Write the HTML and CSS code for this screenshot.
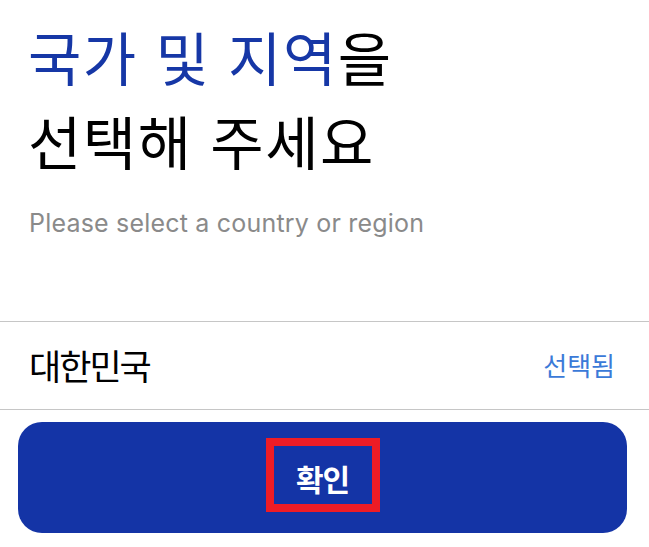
FILE: index.html
```html
<!DOCTYPE html>
<html lang="ko">
<head>
<meta charset="utf-8">
<link rel="stylesheet" href="styles.css">
</head>
<body>
<main class="page">
  <header class="intro">
    <h1 class="title"><span class="accent">국가 및 지역</span>을<br>선택해 주세요</h1>
    <p class="subtitle">Please select a country or region</p>
  </header>
  <ul class="list">
    <li class="row"><span class="name">대한민국</span><span class="status">선택됨</span></li>
  </ul>
  <div class="actions">
    <button class="confirm"><span class="label">확인</span><span class="mark"></span></button>
  </div>
</main>
</body>
</html>
```
FILE: styles.css
```css
* { box-sizing: border-box; }
html, body { margin: 0; padding: 0; background: #fff; }
body {
  width: 649px;
  height: 547px;
  overflow: hidden;
  font-family: "Noto Sans CJK KR", "Noto Sans", sans-serif;
}
.page { display: flex; flex-direction: column; }
.intro { padding: 14px 29px 0 28px; height: 321px; }
.title {
  margin: 0;
  font-size: 58px;
  font-weight: 400;
  line-height: 84px;
  letter-spacing: 1.5px;
  color: #000;
}
.accent { color: #1637a6; }
.subtitle {
  margin: 26px 0 0 1px;
  font-family: "Inter", "Liberation Sans", sans-serif;
  font-size: 25px;
  color: #8a8a8a;
  letter-spacing: 0.2px;
}
.list { list-style: none; margin: 0; padding: 0; }
.row {
  height: 89px;
  border-top: 1px solid #c6c6c6;
  border-bottom: 1px solid #c6c6c6;
  display: flex;
  align-items: center;
  justify-content: space-between;
  padding: 0 34px 2px 29px;
}
.name { font-size: 35px; color: #000; letter-spacing: -2px; }
.status { font-size: 26px; color: #3b7ad8; letter-spacing: 0; }
.actions { padding: 12px 22px 0 18px; }
.confirm {
  position: relative;
  width: 100%;
  height: 111px;
  border: 0;
  border-radius: 24px;
  background: #1434a6;
  color: #fff;
  font-family: "Noto Sans CJK KR", sans-serif;
  font-size: 30px;
  font-weight: 700;
  display: flex;
  align-items: center;
  justify-content: center;
  padding: 0;
}
.label { letter-spacing: -1px; }
.mark {
  position: absolute;
  left: 248px;
  top: 16px;
  width: 114px;
  height: 74px;
  border: 8px solid #ee1c25;
}
```
